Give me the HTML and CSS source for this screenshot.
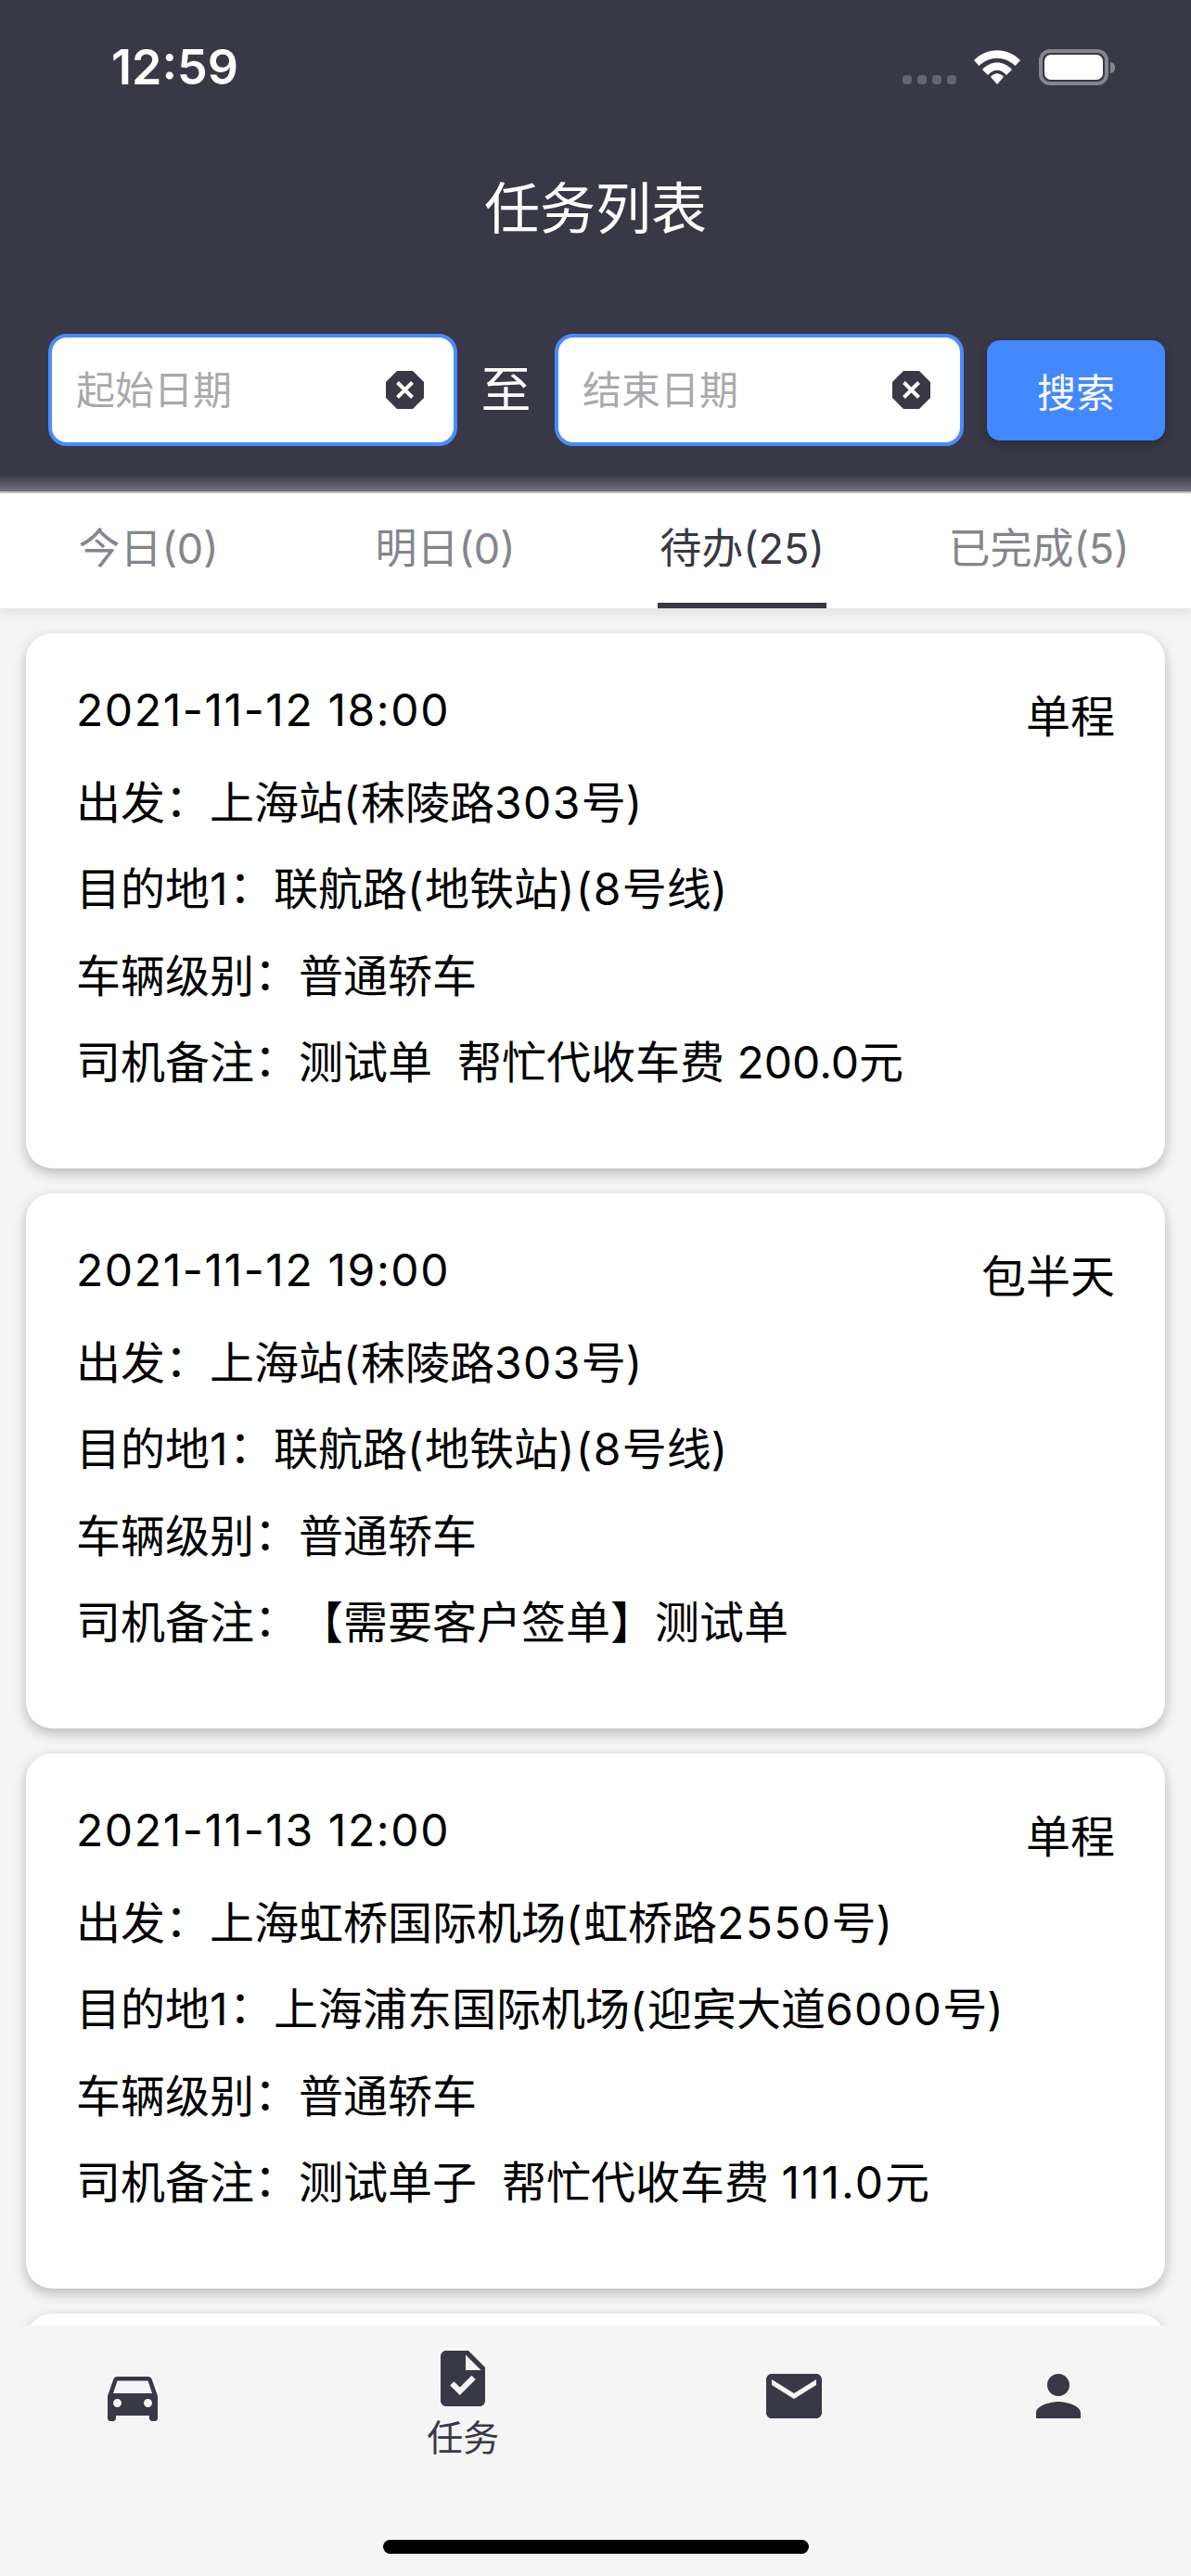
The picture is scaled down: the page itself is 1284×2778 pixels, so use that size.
FILE: index.html
```html
<!DOCTYPE html>
<html lang="zh-CN">
<head>
<meta charset="utf-8">
<title>任务列表</title>
<link rel="stylesheet" href="styles.css">
</head>
<body>
<div class="app">
  <header class="header">
    <div class="status">
      <span class="time">12:59</span>
      <div class="status-icons">
        <div class="signal"><i></i><i></i><i></i><i></i></div>
        <svg class="wifi" viewBox="0 0 50 37"><path d="M0 11C14-3.5 36-3.5 50 11L44.5 17C33 6 17 6 5.5 17Z"/><path d="M9 21C18 11 32 11 41 21L35 27C29 20 21 20 15 27Z"/><path d="M18 29C22 24 28 24 32 29L25 37Z"/></svg>
        <div class="battery"><div class="battery-fill"></div></div>
        <div class="battery-nub"></div>
      </div>
    </div>
    <h1 class="title">任务列表</h1>
    <div class="search">
      <div class="field">
        <span class="placeholder">起始日期</span>
        <svg class="clear" viewBox="0 0 41 41"><polygon points="12,0 29,0 41,12 41,29 29,41 12,41 0,29 0,12"/><path d="M12.5 12.5L28.500 28.500M28.500 12.5L12.5 28.500"/></svg>
      </div>
      <span class="to">至</span>
      <div class="field">
        <span class="placeholder">结束日期</span>
        <svg class="clear" viewBox="0 0 41 41"><polygon points="12,0 29,0 41,12 41,29 29,41 12,41 0,29 0,12"/><path d="M12.5 12.5L28.500 28.500M28.500 12.5L12.5 28.500"/></svg>
      </div>
      <button class="search-btn">搜索</button>
    </div>
  </header>

  <nav class="tabs">
    <div class="tab"><span>今日(0)</span></div>
    <div class="tab"><span>明日(0)</span></div>
    <div class="tab active"><span>待办(25)</span></div>
    <div class="tab"><span>已完成(5)</span></div>
  </nav>

  <main class="list">
    <article class="card">
      <div class="card-top"><span class="date">2021-11-12 18:00</span><span class="kind">单程</span></div>
      <p class="line">出发<span class="colon">：</span>上海站<span class="lat">(</span>秣陵路<span class="lat">303</span>号<span class="lat">)</span></p>
      <p class="line">目的地<span class="lat">1</span><span class="colon">：</span>联航路<span class="lat">(</span>地铁站<span class="lat">)(8</span>号线<span class="lat">)</span></p>
      <p class="line">车辆级别<span class="colon">：</span>普通轿车</p>
      <p class="line">司机备注<span class="colon">：</span>测试单  帮忙代收车费 200.0元</p>
    </article>
    <article class="card">
      <div class="card-top"><span class="date">2021-11-12 19:00</span><span class="kind">包半天</span></div>
      <p class="line">出发<span class="colon">：</span>上海站<span class="lat">(</span>秣陵路<span class="lat">303</span>号<span class="lat">)</span></p>
      <p class="line">目的地<span class="lat">1</span><span class="colon">：</span>联航路<span class="lat">(</span>地铁站<span class="lat">)(8</span>号线<span class="lat">)</span></p>
      <p class="line">车辆级别<span class="colon">：</span>普通轿车</p>
      <p class="line">司机备注<span class="colon">：</span>【需要客户签单】测试单</p>
    </article>
    <article class="card">
      <div class="card-top"><span class="date">2021-11-13 12:00</span><span class="kind">单程</span></div>
      <p class="line">出发<span class="colon">：</span>上海虹桥国际机场<span class="lat">(</span>虹桥路<span class="lat">2550</span>号<span class="lat">)</span></p>
      <p class="line">目的地<span class="lat">1</span><span class="colon">：</span>上海浦东国际机场<span class="lat">(</span>迎宾大道<span class="lat">6000</span>号<span class="lat">)</span></p>
      <p class="line">车辆级别<span class="colon">：</span>普通轿车</p>
      <p class="line">司机备注<span class="colon">：</span>测试单子  帮忙代收车费 <span class="ones">111.0</span>元</p>
    </article>
    <article class="card"></article>
  </main>

  <footer class="bottom">
    <div class="nav-items">
      <div class="nav-item"><svg class="nav-icon" viewBox="0 0 24 24"><path d="M18.92 6.010C18.720 5.420 18.160 5 17.500 5h-11c-.66 0-1.210.42-1.420 1.010L3 12v8c0 .55.45 1 1 1h1c.55 0 1-.45 1-1v-1h12v1c0 .55.45 1 1 1h1c.55 0 1-.45 1-1v-8l-2.080-5.990zM6.500 16c-.83 0-1.500-.67-1.500-1.500S5.670 13 6.500 13s1.500.67 1.500 1.500S7.330 16 6.500 16zm11 0c-.83 0-1.500-.67-1.500-1.500s.67-1.500 1.500-1.500 1.500.67 1.500 1.500-.67 1.500-1.500 1.500zM5 11l1.500-4.500h11L19 11H5z"/></svg></div>
      <div class="nav-item current"><svg class="nav-icon" viewBox="0 0 24 24"><path d="M14 2H6c-1.100 0-1.990.9-1.990 2L4 20c0 1.100.89 2 1.990 2H18c1.100 0 2-.9 2-2V8l-6-6zm-3.060 16L7.400 14.460l1.410-1.410 2.120 2.120 4.240-4.240 1.410 1.410L10.940 18zM13 9V3.500L18.500 9H13z"/></svg><span class="nav-label">任务</span></div>
      <div class="nav-item"><svg class="nav-icon" viewBox="0 0 24 24"><path d="M20 4H4c-1.100 0-1.990.9-1.990 2L2 18c0 1.100.9 2 2 2h16c1.100 0 2-.9 2-2V6c0-1.100-.9-2-2-2zm0 4l-8 5-8-5V6l8 5 8-5v2z"/></svg></div>
      <div class="nav-item"><svg class="nav-icon" viewBox="0 0 24 24"><path d="M12 12c2.210 0 4-1.790 4-4s-1.790-4-4-4-4 1.790-4 4 1.790 4 4 4zm0 2c-2.670 0-8 1.340-8 4v2h16v-2c0-2.660-5.330-4-8-4z"/></svg></div>
    </div>
    <div class="home-bar"></div>
  </footer>
</div>
</body>
</html>
```

FILE: styles.css
```css
* { box-sizing: border-box; }
html, body { margin: 0; padding: 0; }
body {
  font-family: Inter, "Noto Sans CJK SC", sans-serif;
  background: #f5f5f5;
  color: #000;
}
.app {
  width: 1284px;
  height: 2778px;
  display: flex;
  flex-direction: column;
  overflow: hidden;
}

/* Header */
.header {
  height: 532px;
  flex: none;
  background: linear-gradient(#383846 0, #383846 512px, #777782 530px, #c8c8c8 530px);
  display: flex;
  flex-direction: column;
}
.status {
  height: 126px;
  padding: 43px 0 0 120px;
  display: flex;
  justify-content: space-between;
  align-items: flex-start;
}
.time {
  font-size: 52px;
  line-height: 60px;
  font-weight: 600;
  color: #fff;
}
.status-icons {
  display: flex;
  align-items: flex-start;
  padding: 10px 82px 0 0;
}
.signal {
  display: flex;
  gap: 6px;
  margin: 28px 19px 0 0;
}
.signal i {
  display: block;
  width: 10px;
  height: 10px;
  border-radius: 4px;
  background: #666672;
}
.wifi { width: 50px; height: 37px; fill: #fff; margin: 1px 20px 0 0; }
.battery {
  width: 75px;
  height: 39px;
  border: 4px solid #85858f;
  border-radius: 12px;
  padding: 2px;
}
.battery-fill { height: 100%; background: #fff; border-radius: 7px; }
.battery-nub {
  width: 5px;
  height: 12px;
  margin: 14px 0 0 2px;
  background: #85858f;
  border-radius: 0 6px 6px 0;
}
.title {
  margin: 0;
  height: 234px;
  padding-top: 54px;
  font-size: 60px;
  line-height: 90px;
  font-weight: 400;
  color: #fff;
  text-align: center;
}
.search {
  display: flex;
  align-items: center;
  padding: 0 27px 0 52px;
}
.field {
  width: 441px;
  height: 121px;
  flex: none;
  background: #fff;
  border: 4px solid #4a8cff;
  border-radius: 20px;
  padding: 0 32px 0 26px;
  display: flex;
  align-items: center;
  justify-content: space-between;
}
.placeholder { font-size: 42px; line-height: 60px; color: #aaa; }
.clear { width: 41px; height: 41px; }
.clear polygon { fill: #383846; }
.clear path { stroke: #fff; stroke-width: 4; fill: none; }
.to {
  width: 105px;
  flex: none;
  text-align: center;
  font-size: 54px;
  line-height: 60px;
  color: #fff;
}
.search-btn {
  width: 192px;
  height: 108px;
  margin-left: 25px;
  flex: none;
  border: 0;
  border-radius: 14px;
  background: #4488ff;
  color: #fff;
  font: 400 42px Inter, "Noto Sans CJK SC", sans-serif;
  box-shadow: 0 3px 8px rgba(0, 0, 0, .25);
}

/* Tabs */
.tabs {
  height: 124px;
  flex: none;
  display: flex;
  padding-right: 4px;
  background: #fff;
  box-shadow: 0 4px 16px rgba(0, 0, 0, .1);
  position: relative;
}
.tab {
  flex: 1;
  display: flex;
  justify-content: center;
  font-size: 45px;
  color: #85858d;
}
.tab span {
  height: 124px;
  padding: 0 2px;
  line-height: 120px;
  border-bottom: 6px solid transparent;
}
.tab.active { color: #383846; }
.tab.active span { border-bottom-color: #383846; }

/* Cards */
.list {
  flex: 1;
  min-height: 0;
  overflow: hidden;
  padding: 27px 28px 0;
  display: flex;
  flex-direction: column;
  gap: 27px;
}
.card {
  height: 577px;
  flex: none;
  background: #fff;
  border-radius: 28px;
  padding: 36px 54px 0;
  box-shadow: 0 5px 14px rgba(0, 0, 0, .25);
}
.card-top {
  display: flex;
  justify-content: space-between;
  align-items: flex-start;
  margin-bottom: 6px;
}
.date { font-size: 48px; line-height: 93.500px; letter-spacing: 1.600px; }
.kind { font-size: 48px; line-height: 79.500px; padding-top: 14px; }
.line {
  margin: 0;
  font-size: 48px;
  line-height: 93.500px;
  white-space: pre-wrap;
}
.lat { letter-spacing: 1.400px; }
.ones { letter-spacing: 2px; }
.colon {
  display: inline-block;
  width: 1em;
  text-align: left;
  font-family: "Noto Sans CJK TC", sans-serif;
  font-feature-settings: "palt";
  line-height: 1;
}

/* Bottom nav */
.bottom {
  height: 270px;
  flex: none;
  background: #f5f5f5;
  display: flex;
  flex-direction: column;
  position: relative;
}
.nav-items { display: flex; flex: 1; }
.nav-item {
  flex: 1;
  display: flex;
  flex-direction: column;
  align-items: center;
  padding-top: 40px;
}
.nav-item.current { flex: 1.500; padding-top: 21px; }
.nav-icon { width: 72px; height: 72px; fill: #383846; display: block; }
.nav-label {
  font-size: 39px;
  line-height: 52px;
  margin-top: 2px;
  color: #383846;
}
.home-bar {
  width: 459px;
  height: 15px;
  margin: 0 auto 24px;
  border-radius: 8px;
  background: #000;
}
```
